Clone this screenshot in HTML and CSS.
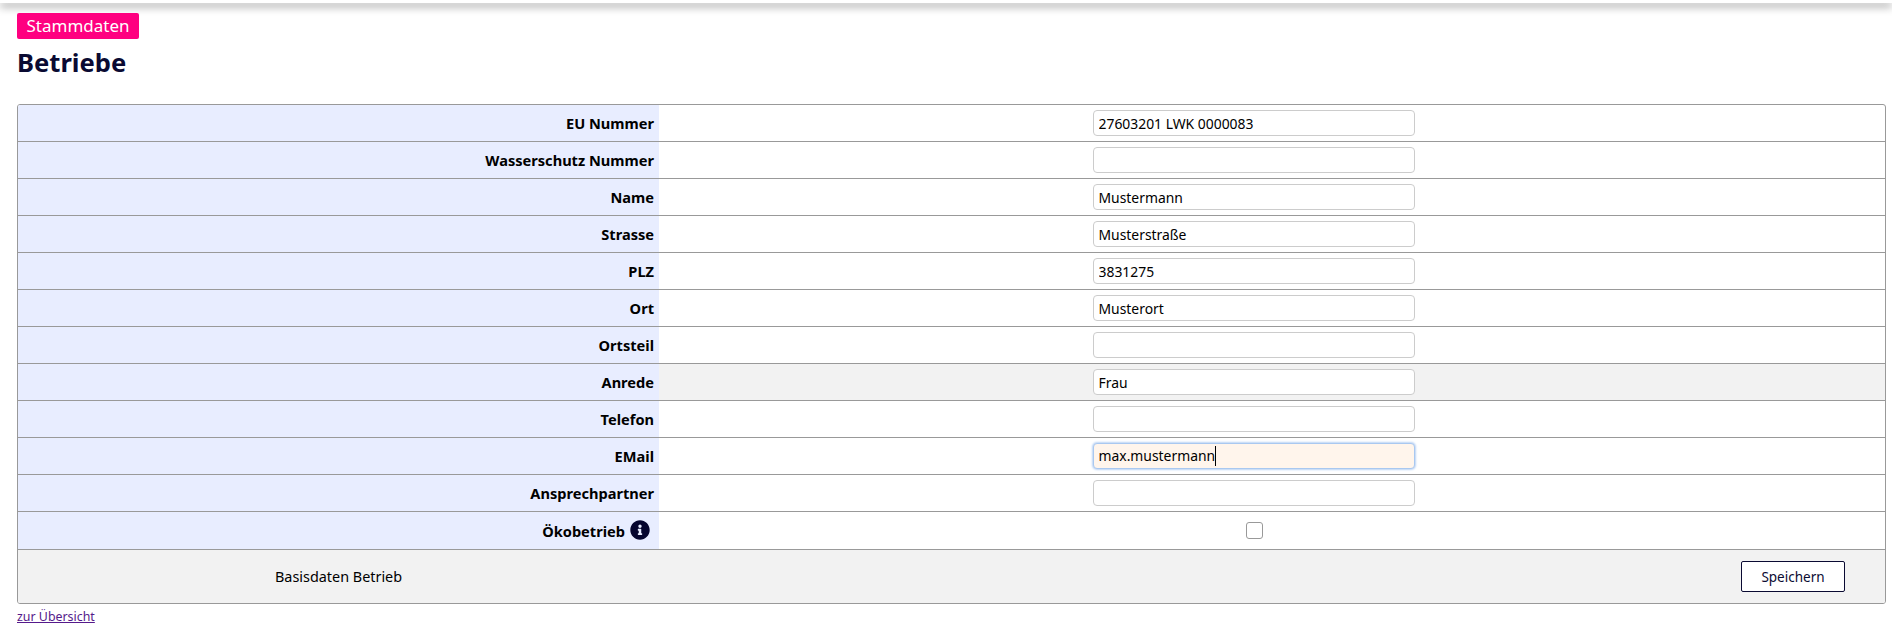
FILE: index.html
```html
<!DOCTYPE html>
<html lang="de">
<head>
<meta charset="utf-8">
<title>Betriebe</title>
<link rel="stylesheet" href="styles.css">
</head>
<body>
<div class="topbar"></div>
<main class="page">
  <span class="badge">Stammdaten</span>
  <h1 class="title">Betriebe</h1>
  <form class="table">
    <div class="row"><label class="label">EU Nummer</label><div class="value"><input class="field" type="text" value="27603201 LWK 0000083"></div></div>
    <div class="row"><label class="label">Wasserschutz Nummer</label><div class="value"><input class="field" type="text"></div></div>
    <div class="row"><label class="label">Name</label><div class="value"><input class="field" type="text" value="Mustermann"></div></div>
    <div class="row"><label class="label">Strasse</label><div class="value"><input class="field" type="text" value="Musterstraße"></div></div>
    <div class="row"><label class="label">PLZ</label><div class="value"><input class="field" type="text" value="3831275"></div></div>
    <div class="row"><label class="label">Ort</label><div class="value"><input class="field" type="text" value="Musterort"></div></div>
    <div class="row"><label class="label">Ortsteil</label><div class="value"><input class="field" type="text"></div></div>
    <div class="row row-alt"><label class="label">Anrede</label><div class="value"><input class="field" type="text" value="Frau"></div></div>
    <div class="row"><label class="label">Telefon</label><div class="value"><input class="field" type="text"></div></div>
    <div class="row"><label class="label">EMail</label><div class="value"><div class="field field-focus">max.mustermann<span class="caret"></span></div></div></div>
    <div class="row"><label class="label">Ansprechpartner</label><div class="value"><input class="field" type="text"></div></div>
    <div class="row row-check"><label class="label">Ökobetrieb
      <svg class="info" viewBox="0 0 512 512" aria-hidden="true"><path fill="#05052e" d="M256 8C119.043 8 8 119.083 8 256c0 136.997 111.043 248 248 248s248-111.003 248-248C504 119.083 392.957 8 256 8zm0 110c23.196 0 42 18.804 42 42s-18.804 42-42 42-42-18.804-42-42 18.804-42 42-42zm56 254c0 6.627-5.373 12-12 12h-88c-6.627 0-12-5.373-12-12v-24c0-6.627 5.373-12 12-12h12v-64h-12c-6.627 0-12-5.373-12-12v-24c0-6.627 5.373-12 12-12h64c6.627 0 12 5.373 12 12v100h12c6.627 0 12 5.373 12 12v24z"/></svg></label><div class="value"><span class="check"></span></div></div>
    <div class="footer"><span class="footer-text">Basisdaten Betrieb</span><button class="save" type="button">Speichern</button></div>
  </form>
  <a class="back" href="#">zur Übersicht</a>
</main>
</body>
</html>
```
FILE: styles.css
```css
* { box-sizing: border-box; }
html, body { margin: 0; padding: 0; background: #fff; }
body { font-family: "Noto Sans", sans-serif; font-size: 14px; color: #000; height: 625px; overflow: hidden; }
.topbar { height: 3px; background: #fff; box-shadow: 0 3px 8px rgba(0,0,0,.6); }
.page { padding: 10px 6px 0 17px; }
.badge { display: block; width: 122px; height: 26px; background: #ff0080; color: #fff; border-radius: 2px; font-size: 17px; line-height: 26px; text-align: center; }
.title { margin: 5px 0 0; height: 60px; font-size: 25.6px; font-weight: 700; line-height: 38px; color: #0a0a32; }
.table { border: 1px solid #999; border-radius: 3px; overflow: hidden; }
.row { display: flex; height: 37px; border-bottom: 1px solid #999; }
.row-check { height: 38px; }
.row-alt { background: #f2f2f2; }
.label { width: 641px; flex: none; background: #e8edff; padding-right: 5px; display: flex; align-items: center; justify-content: flex-end; gap: 5px; font-weight: 700; font-size: 14.6px; }
.value { flex: 1; display: flex; align-items: center; justify-content: center; padding-right: 37px; }
.field { width: 322px; height: 26px; border: 1px solid #ccc; border-radius: 4px; padding: 0 5px; background: #fff; font: 13.9px "Noto Sans", sans-serif; color: #000; outline: 0; }
.field-focus { background: #fff5ec; border-color: #a9c8f0; box-shadow: 0 0 2px 1px #bcd4f5; line-height: 24px; display: flex; align-items: center; }
.caret { display: block; width: 1px; height: 20px; background: #000; }
.info { width: 20px; height: 20px; margin: 0 4px 2px 0; }
.check { width: 17px; height: 17px; margin-left: 2px; border: 1px solid #999; border-radius: 3px; background: #fff; }
.footer { height: 53px; background: #f2f2f2; display: flex; align-items: center; padding: 0 40px 0 257px; justify-content: space-between; }
.footer-text { font-size: 14.4px; }
.save { width: 104px; height: 31px; background: #fff; border: 1px solid #0a0a32; border-radius: 2px; color: #0a0a32; font: 13.5px "Noto Sans", sans-serif; padding: 0; }
.back { display: block; margin-top: 4px; font-size: 12.4px; color: #551a8b; text-decoration: underline; }
```
